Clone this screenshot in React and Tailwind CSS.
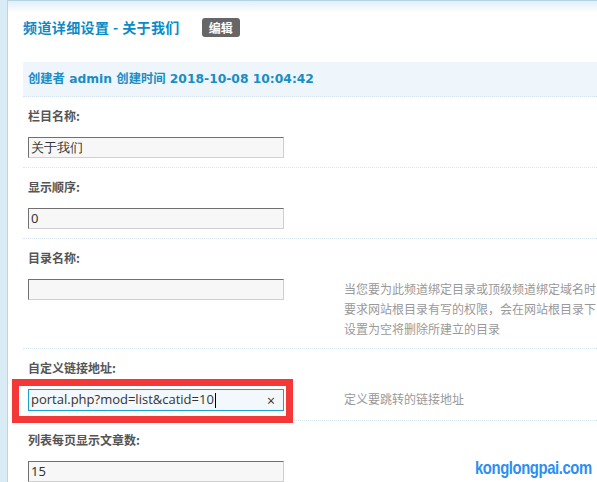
import React from 'react';

const cjk = { fontFamily: '"Noto Sans CJK SC", "Noto Sans", sans-serif' };

// ------- form row pieces -------
const Label = ({ children }) => (
  <div className="h-[18px] leading-[18px] text-[12px] font-bold text-[#555]" style={cjk}>
    {children}
  </div>
);

const PlainInput = ({ value }) => (
  <div className="w-[256px] h-[21px] shrink-0 border border-t-[#707070] border-l-[#707070] border-b-[#cfcfcf] border-r-[#cfcfcf] bg-[#f7f7f7] pl-[2px] text-[13px] leading-[19px] text-[#333]">
    {value}
  </div>
);

const Hint = ({ children }) => (
  <div className="ml-[60px] text-[12px] leading-[20px] text-[#999] whitespace-nowrap" style={cjk}>
    {children}
  </div>
);

const Row = ({ label, first, children }) => (
  <div className={`pl-[5px] pt-[10px] pb-[9px] ${first ? '' : 'border-t border-dotted border-[#d6e6f1]'}`}>
    <Label>{label}</Label>
    <div className="mt-[12px] flex items-start">{children}</div>
  </div>
);

export default function App() {
  return (
    <div className="relative w-[597px] h-[482px] overflow-hidden bg-white flex">
      {/* left frame strip */}
      <div className="w-[8px] shrink-0 bg-[#d9ebf5] border-r border-[#b8d5e5]" />

      <div className="flex-1 min-w-0 border-t border-[#b5d3e3] bg-[linear-gradient(to_bottom,#e2eff7,#ffffff_12px)]">
        {/* header */}
        <div className="h-[61px] pl-[15px] pt-[16px] flex items-start">
          <h1 className="text-[14px] leading-[20px] font-bold text-[#0b8bc6] tracking-[0.4px]" style={cjk}>
            频道详细设置 - 关于我们
          </h1>
          <span className="ml-[22px] mt-[1px] h-[19px] px-[7px] rounded-[3px] bg-[#666] text-white text-[12px] leading-[19px] font-bold" style={cjk}>
            编辑
          </span>
        </div>

        {/* info bar */}
        <div className="ml-[15px] h-[35px] bg-[#eef5fb] border-b border-dotted border-[#d2e3ee] pl-[5px] flex items-center whitespace-nowrap text-[12.3px] font-bold text-[#1a8dc4]" style={{ fontFamily: '"DejaVu Sans", "Noto Sans CJK SC", sans-serif' }}>
          创建者 admin 创建时间 2018-10-08 10:04:42
        </div>

        <div className="ml-[15px]">
          <Row label="栏目名称:" first>
            <PlainInput value="关于我们" />
          </Row>
          <Row label="显示顺序:">
            <PlainInput value="0" />
          </Row>
          <Row label="目录名称:">
            <PlainInput value="" />
            <Hint>
              当您要为此频道绑定目录或顶级频道绑定域名时<br />
              要求网站根目录有写的权限，会在网站根目录下<br />
              设置为空将删除所建立的目录
            </Hint>
          </Row>
          <Row label="自定义链接地址:">
            <div className="relative w-[256px] h-[22px] shrink-0 border border-[#1d9fd1] bg-[#f3f8fd] pl-[2px] flex items-center text-[13px] text-[#333]" style={{ fontFamily: '"Open Sans", "Noto Sans", sans-serif' }}>
              <span>portal.php?mod=list&amp;catid=10</span>
              <span className="w-px h-[15px] bg-black ml-[1px]" />
              <span className="absolute right-[8px] top-[2px] text-[14px] leading-[17px] text-[#333]">×</span>
            </div>
            <Hint>定义要跳转的链接地址</Hint>
          </Row>
          <Row label="列表每页显示文章数:">
            <PlainInput value="15" />
          </Row>
        </div>
      </div>

      {/* red annotation box */}
      <div className="absolute left-[12px] top-[379px] w-[281px] h-[44px] border-[7px] border-[#f43838]" />

      {/* watermark */}
      <div className="absolute right-[5px] bottom-[5px] origin-right scale-x-[0.78] text-[19px] leading-[19px] font-bold tracking-[-0.5px] text-[#2b8ef2]" style={{ fontFamily: '"Liberation Sans", "Roboto", sans-serif' }}>
        konglongpai.com
      </div>
    </div>
  );
}
